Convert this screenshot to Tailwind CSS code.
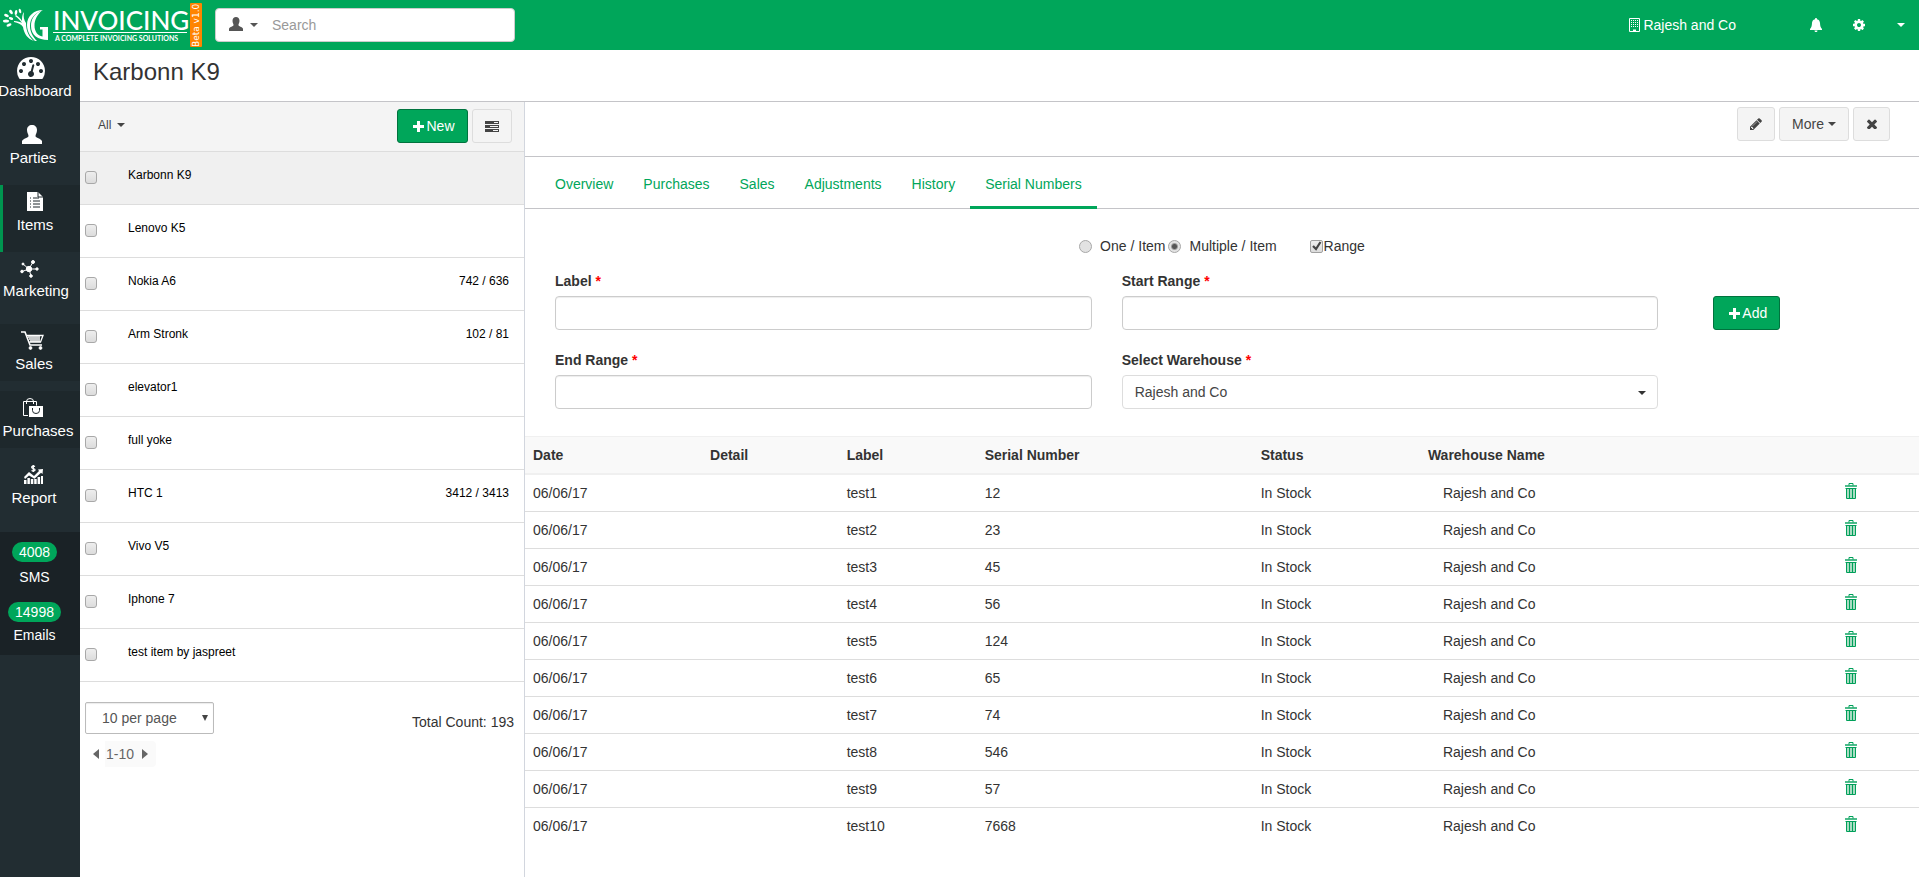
<!DOCTYPE html>
<html lang="en">
<head>
    <meta charset="UTF-8">
    <meta name="viewport" content="width=device-width, initial-scale=1.0">
    <title>Karbonn K9 - G Invoicing</title>
    <script src="https://cdn.jsdelivr.net/npm/@tailwindcss/browser@4"></script>
</head>
<body class="flex min-h-screen flex-col bg-white font-['Liberation_Sans',Arial,sans-serif] text-sm leading-5 text-[#333]">

    <!-- Top bar -->
    <header class="flex h-[50px] items-center bg-[#00a65a] text-white">
        <a href="#" class="flex h-full w-[215px] shrink-0 items-center pl-[3px]" aria-label="G Invoicing">
            <svg class="h-[34px] w-[46px] shrink-0" viewBox="3 9 46 34" fill="#fff">
                <path d="M24 13c-1 5 0 8 2 11 0 8 3 14 8 18-6-2-10-7-11-14-2-3-5-4-9-5v-1c4 0 6 1 8 2-2-3-4-5-7-7l1-1c3 2 5 4 6 6 0-4 0-6 2-9z"/>
                <path d="M43 11c-9 0-16 6-16 15 0 8 5 13 8 16l2 0c-4-4-7-9-7-15 0-8 5-13 13-16z"/>
                <path d="M42 11.500c-8 3-11 9-11 15.500 0 9 7 14 17 14V28h-8v2.500h2.500v7c-5-1-8-5-8-11 0-6 3-11 7.500-15z"/>
                <ellipse cx="6" cy="22" rx="3" ry="1.500"/>
                <ellipse cx="9" cy="26" rx="2.600" ry="1.400" transform="rotate(-20 9 26)"/>
                <ellipse cx="6.500" cy="16.500" rx="2.500" ry="1.500" transform="rotate(25 6.500 16.500)"/>
                <ellipse cx="11" cy="13" rx="2.500" ry="1.500" transform="rotate(55 11 13)"/>
                <ellipse cx="16" cy="13.500" rx="2.500" ry="1.300" transform="rotate(100 16 13.500)"/>
                <ellipse cx="20" cy="12" rx="2.300" ry="1.200" transform="rotate(75 20 12)"/>
                <ellipse cx="11" cy="19.500" rx="2.300" ry="1.200" transform="rotate(20 11 19.500)"/>
            </svg>
            <span class="ml-1 flex w-[134px] flex-col font-[Lato,sans-serif] whitespace-nowrap">
                <span class="border-b border-white text-[26px] leading-6 font-medium">INVOICING</span>
                <span class="pl-0.5 text-[7px] leading-[10px] font-bold">A COMPLETE INVOICING SOLUTIONS</span>
            </span>
            <span class="ml-[3px] flex h-[44px] w-3 rotate-180 items-center justify-center rounded-[1px] bg-[#ff8400] font-['DejaVu_Sans',sans-serif] text-[9px] leading-3 whitespace-nowrap [writing-mode:vertical-rl]">Beta v1.0</span>
        </a>
        <form class="flex h-[34px] w-[300px] items-center rounded border border-[#ccc] bg-white text-[#555]">
            <button type="button" class="flex items-center gap-[7px] pl-[13px]" aria-label="Search in parties">
                <svg class="mb-0.5 h-[14px] w-[14px]" viewBox="0 0 20 19" preserveAspectRatio="none" fill="currentColor"><path d="M10 0c3 0 5 2 5 5 0 3-1.500 4-1.500 6 0 2 5.500 2.500 6.500 5v3H0v-3c1-2.500 6.500-3 6.500-5 0-2-1.500-3-1.500-6 0-3 2-5 5-5z"/></svg>
                <svg class="h-1 w-2" viewBox="0 0 8 4" fill="currentColor"><path d="M0 0h8L4 4z"/></svg>
            </button>
            <input type="text" aria-label="Search" placeholder="Search" class="ml-[14px] w-full bg-transparent outline-none placeholder:text-[#999]">
        </form>
        <nav class="ml-auto flex items-center pr-[14px]">
            <a href="#" class="mr-[74px] flex items-center gap-[3px]">
                <svg class="h-[14px] w-[11px]" viewBox="0 0 11 14" fill="none" stroke="#fff"><path d="M.5.5h10v13H.5z"/><path d="M2.500 2v8M4.500 2v8M6.500 2v8M8.500 2v8" stroke-dasharray="1 1"/><path d="M4 12.500h3" stroke-width="2"/></svg>
                Rajesh and Co
            </a>
            <a href="#" class="mr-[31px]" aria-label="Notifications">
                <svg class="h-[14px] w-3" viewBox="0 0 12 14" fill="#fff"><path d="M6 0c.7 0 1 .5 1 1.200C9 1.600 9.800 3 10 5c.2 3 .5 4 2 6v1H0v-1c1.500-2 1.800-3 2-6 .2-2 1-3.400 3-3.800C5 .5 5.300 0 6 0zM4.500 12.500h3c0 1-.7 1.500-1.500 1.500s-1.500-.5-1.500-1.500z"/></svg>
            </a>
            <a href="#" class="mr-8" aria-label="Settings">
                <svg class="h-3 w-3" viewBox="128 128 1536 1536" fill="#fff"><path d="M1152 896q0-106-75-181t-181-75-181 75-75 181 75 181 181 75 181-75 75-181zm512-109v222q0 12-8 23t-20 13l-185 28q-19 54-39 91 35 50 107 138 10 12 10 25t-9 23q-27 37-99 108t-94 71q-12 0-26-9l-138-108q-44 23-91 38-16 136-29 186-7 28-36 28h-222q-14 0-24.500-8.500t-11.500-21.500l-28-184q-49-16-90-37l-141 107q-10 9-25 9-14 0-25-11-126-114-165-168-7-10-7-23 0-12 8-23 15-21 51-66.500t54-70.500q-27-50-41-99l-183-27q-13-2-21-12.500t-8-23.500v-222q0-12 8-23t19-13l186-28q14-46 39-92-40-57-107-138-10-12-10-24 0-10 9-23 26-36 98.500-107.500t94.500-71.500q13 0 26 10l138 107q44-23 91-38 16-136 29-186 7-28 36-28h222q14 0 24.500 8.500t11.500 21.500l28 184q49 16 90 37l142-107q9-9 24-9 13 0 25 10 129 119 165 170 7 8 7 22 0 12-8 23-15 21-51 66.500t-54 70.500q26 50 41 98l183 28q13 2 21 12.500t8 23.500z"/></svg>
            </a>
            <a href="#" aria-label="Account"><svg class="h-1 w-2" viewBox="0 0 8 4" fill="#fff"><path d="M0 0h8L4 4z"/></svg></a>
        </nav>
    </header>

    <div class="flex grow">
        <!-- Sidebar -->
        <nav class="flex w-20 shrink-0 flex-col bg-[#222d32] text-[15px] text-white">
            <a href="#" class="flex h-[67px] flex-col pt-[7px]">
                <span class="flex w-[70px] flex-col items-center gap-0.5">
                    <svg class="mr-2 h-[22px] w-7" viewBox="0 256 1792 1408" fill="#fff"><path d="M384 1152q0-53-37.500-90.500t-90.500-37.500-90.500 37.500-37.500 90.500 37.500 90.500 90.500 37.500 90.500-37.500 37.500-90.500zm192-448q0-53-37.500-90.500t-90.500-37.500-90.500 37.500-37.500 90.500 37.500 90.500 90.500 37.500 90.500-37.500 37.500-90.500zm428 481l101-382q6-26-7.500-48.500t-38.500-29.500-48 6.500-30 39.500l-101 382q-60 5-107 43.500t-63 98.500q-20 77 20 146t117 89 146-20 89-117q16-60-6-117t-72-91zm660-33q0-53-37.500-90.500t-90.500-37.500-90.500 37.500-37.500 90.500 37.500 90.500 90.500 37.500 90.500-37.500 37.500-90.500zm-640-640q0-53-37.500-90.500t-90.500-37.500-90.500 37.500-37.500 90.500 37.500 90.500 90.500 37.500 90.500-37.500 37.500-90.500zm448 192q0-53-37.500-90.500t-90.500-37.500-90.500 37.500-37.500 90.500 37.500 90.500 90.500 37.500 90.500-37.500 37.500-90.500zm320 448q0 261-141 483-19 29-54 29h-1402q-35 0-54-29-141-221-141-483 0-182 71-348t191-286 286-191 348-71 348 71 286 191 191 286 71 348z"/></svg>
                    Dashboard
                </span>
            </a>
            <a href="#" class="flex h-[68px] flex-col pt-2">
                <span class="flex w-[66px] flex-col items-center gap-1">
                    <svg class="mr-0.5 h-[19px] w-5" viewBox="0 0 20 19" fill="#fff"><path d="M10 0c3 0 5 2 5 5 0 3-1.500 4-1.500 6 0 2 5.500 2.500 6.500 5v3H0v-3c1-2.500 6.500-3 6.500-5 0-2-1.500-3-1.500-6 0-3 2-5 5-5z"/></svg>
                    Parties
                </span>
            </a>
            <a href="#" class="flex h-[67px] flex-col border-l-3 border-[#00954f] bg-[#1e282c] pt-[7px]">
                <span class="flex w-16 flex-col items-center gap-1">
                    <svg class="h-[19px] w-4" viewBox="0 0 16 19"><path d="M0 0h11l5 5v14H0z" fill="#fff"/><path d="M11 0v5h5M3 6h1M6 6h6M3 9h1M6 9h7M3 12h1M6 12h7M3 15h1M6 15h7" stroke="#1e282c" fill="none"/></svg>
                    Items
                </span>
            </a>
            <a href="#" class="flex h-[72px] flex-col pt-2">
                <span class="flex w-[72px] flex-col items-center gap-[3px]">
                    <svg class="mr-[14px] h-[18px] w-[19px]" viewBox="0 0 19 18" fill="#fff" stroke="#fff"><circle cx="9" cy="9" r="2.700"/><circle cx="2" cy="11.500" r="1.300"/><circle cx="3" cy="4" r="1"/><circle cx="13" cy="2" r="1.500"/><circle cx="17" cy="9" r="1.200"/><circle cx="11" cy="16" r="1.300"/><path d="M9 9L2 11.500M9 9L3 4M9 9l4-7M9 9h8M9 9l2 7"/></svg>
                    Marketing
                </span>
            </a>
            <a href="#" class="mb-[10px] flex h-[57px] flex-col bg-[#1e282c] pt-[7px]">
                <span class="flex w-[68px] flex-col items-center gap-1">
                    <svg class="mr-1 h-[19px] w-[23px]" viewBox="0 0 23 19" fill="none" stroke="#fff"><path d="M0 1h4l5 13h12" stroke-width="1.600"/><path d="M6 4.500h16l-2.500 6.500H8.500" stroke-width="1.300"/><path d="M7 6h12M8 8h11M9 10h10" stroke-width="1.300"/><circle cx="9.500" cy="17" r="1.400" fill="#fff"/><circle cx="19.500" cy="17" r="1.400" fill="#fff"/></svg>
                    Sales
                </span>
            </a>
            <a href="#" class="flex h-[57px] flex-col bg-[#1e282c] pt-[7px]">
                <span class="flex w-[76px] flex-col items-center gap-1">
                    <svg class="mr-[10px] h-[19px] w-5" viewBox="0 0 20 19" fill="none" stroke="#fff"><path d="M5 17.500H.5v-14h13v4"/><path d="M3.500 6V3.500a3.500 3 0 0 1 7 0V6"/><path d="M6 8h14v11H6z" fill="#fff" stroke="none"/><path d="M9.500 10v2.500a3.500 3 0 0 0 7 0V10" stroke="#1e282c"/></svg>
                    Purchases
                </span>
            </a>
            <a href="#" class="flex h-[84px] flex-col pt-[17px]">
                <span class="flex w-[68px] flex-col items-center gap-1">
                    <svg class="mr-0.5 h-[19px] w-[19px]" viewBox="0 0 19 19" fill="#fff"><path d="M0 15h2.500v4H0zM3.400 13h2.500v6h-2.500zM6.800 14h2.500v5h-2.500zM10.200 14h2.500v5h-2.500zM13.600 12h2.500v7h-2.500zM17 11h2v8h-2z"/><path d="M0 12l5-5 5 4 5-5-1-1.500 5-.5-.5 5-1.500-1.200-6.500 6L5 10.500 1 14z"/><path d="M11 1.500C9 .5 7.500 1 7.700 2.300c.2 1.500 3.200 1 3.300 2.500.1 1.200-1.800 1.500-3.500.7M9.300 0v7" fill="none" stroke="#fff" stroke-width="1.300"/></svg>
                    Report
                </span>
            </a>
            <div class="flex h-[123px] flex-col bg-[#1a2226] pt-[10px] text-sm">
                <a href="#" class="flex h-[60px] w-[69px] flex-col items-center gap-[5px]"><span class="rounded-full bg-[#00a65a] px-[7px]">4008</span>SMS</a>
                <a href="#" class="flex w-[69px] flex-col items-center gap-[3px]"><span class="rounded-full bg-[#00a65a] px-[7px]">14998</span>Emails</a>
            </div>
        </nav>

        <main class="flex min-w-0 grow flex-col">
            <div class="h-[52px] border-b border-[#c4c4c8] px-[13px] pt-2">
                <h1 class="text-2xl leading-7">Karbonn K9</h1>
            </div>

            <div class="flex grow">
                <!-- Item list -->
                <section class="w-[445px] shrink-0 border-r border-[#d2d6de]">
                    <div class="flex h-[50px] justify-end gap-1 border-b border-[#ddd] bg-[#f4f4f4] pt-[7px] pr-3">
                        <button type="button" class="mr-auto ml-[18px] flex h-8 items-center gap-1.5 text-xs text-[#444]">All
                            <svg class="h-1 w-2" viewBox="0 0 8 4" fill="currentColor"><path d="M0 0h8L4 4z"/></svg>
                        </button>
                        <button type="button" class="flex h-[34px] w-[71px] items-center justify-center gap-0.5 rounded-[3px] border border-[#00733e] bg-[#00a65a] pl-[3px] text-white">
                            <svg class="h-[11px] w-[11px]" viewBox="0 0 11 11" fill="currentColor"><path d="M4 0h3v4h4v3H7v4H4V7H0V4h4z"/></svg>New
                        </button>
                        <button type="button" class="flex h-[34px] w-10 items-center justify-center rounded-[3px] border border-[#ddd] bg-[#f4f4f4] text-[#444]" aria-label="Filter">
                            <svg class="h-[11px] w-[14px]" viewBox="0 0 14 11"><path d="M0 0h14v3H0zM0 4h14v3H0zM0 8h14v3H0z" fill="currentColor"/><path d="M9 1.500h4M5 5.500h8M8 9.500h5" stroke="#f4f4f4"/></svg>
                        </button>
                    </div>
                    <ul id="itemList"></ul>
                    <div class="flex justify-between pt-5 pr-[10px] pl-[5px]">
                        <div>
                            <div class="relative h-8 w-[129px]">
                                <select aria-label="Items per page" class="h-full w-full appearance-none rounded-[2px] border border-[#bbb] bg-white pl-4 text-[#555] shadow-[inset_0_1px_1px_rgba(0,0,0,0.08)]"><option>10 per page</option></select>
                                <svg class="pointer-events-none absolute top-[13px] right-[6px] h-[6px] w-[6px]" viewBox="0 0 6 6" fill="#444"><path d="M0 0h6L3 6z"/></svg>
                            </div>
                            <div class="mt-[7px] flex h-[26px] items-center text-[#666]">
                                <button type="button" class="w-5 pl-2" aria-label="Previous"><svg class="h-[10px] w-[6px]" viewBox="0 0 6 10" fill="#666"><path d="M6 0v10L0 5z"/></svg></button>
                                <span class="flex h-full items-center gap-2 rounded-r bg-[#fafafa] pr-2 pl-px">1-10
                                    <button type="button" aria-label="Next"><svg class="h-[10px] w-[6px]" viewBox="0 0 6 10" fill="#666"><path d="M0 0v10l6-5z"/></svg></button>
                                </span>
                            </div>
                        </div>
                        <p class="pt-[10px]">Total Count: 193</p>
                    </div>
                </section>

                <!-- Item detail -->
                <section class="min-w-0 grow">
                    <div class="flex h-[55px] justify-end gap-1 border-b border-[#c4c4c8] pt-[5px] pr-[29px] text-[#444]">
                        <button type="button" class="flex h-[34px] w-[38px] items-center justify-center rounded-[3px] border border-[#ddd] bg-[#f4f4f4]" aria-label="Edit">
                            <svg class="h-3 w-3" viewBox="128 128 1536 1536" fill="currentColor"><path d="M491 1536l91-91-235-235-91 91v107h128v128h107zm523-928q0-22-22-22-10 0-17 7l-542 542q-7 7-7 17 0 22 22 22 10 0 17-7l542-542q7-7 7-17zm-54-192l416 416-832 832h-416v-416zm683 96q0 53-37 90l-166 166-416-416 166-165q36-38 90-38 53 0 91 38l235 234q37 39 37 91z"/></svg>
                        </button>
                        <button type="button" class="flex h-[34px] w-[70px] items-center justify-center gap-1 rounded-[3px] border border-[#ddd] bg-[#f4f4f4]">More
                            <svg class="h-1 w-2" viewBox="0 0 8 4" fill="currentColor"><path d="M0 0h8L4 4z"/></svg>
                        </button>
                        <button type="button" class="flex h-[34px] w-[37px] items-center justify-center rounded-[3px] border border-[#ddd] bg-[#f4f4f4]" aria-label="Close">
                            <svg class="h-[10px] w-[10px]" viewBox="302 302 1188 1188" fill="currentColor"><path d="M1490 1322q0 40-28 68l-136 136q-28 28-68 28t-68-28l-294-294-294 294q-28 28-68 28t-68-28l-136-136q-28-28-28-68t28-68l294-294-294-294q-28-28-28-68t28-68l136-136q28-28 68-28t68 28l294 294 294-294q28-28 68-28t68 28l136 136q28 28 28 68t-28 68l-294 294 294 294q28 28 28 68z"/></svg>
                        </button>
                    </div>

                    <nav class="flex h-[52px] border-b border-[#c4c4c8] px-[15px] text-[#00a65a]">
                        <a href="#" class="px-[15px] pt-[17px]">Overview</a>
                        <a href="#" class="px-[15px] pt-[17px]">Purchases</a>
                        <a href="#" class="px-[15px] pt-[17px]">Sales</a>
                        <a href="#" class="px-[15px] pt-[17px]">Adjustments</a>
                        <a href="#" class="px-[15px] pt-[17px]">History</a>
                        <a href="#" class="-mb-px border-b-3 border-[#00a65a] px-[15px] pt-[17px]">Serial Numbers</a>
                    </nav>

                    <form class="pt-[27px] pr-[19px] pl-[15px]">
                        <div class="flex justify-center pl-1">
                            <label class="flex items-center"><input type="radio" name="mode" class="mr-2 h-[13px] w-[13px] appearance-none rounded-full border border-[#a8a8a8] bg-[#e2e2e2]">One / Item</label>
                            <label class="ml-[3px] flex items-center"><input type="radio" name="mode" checked class="mr-2 h-[13px] w-[13px] appearance-none rounded-full border border-[#a8a8a8] bg-[#e2e2e2] checked:bg-[radial-gradient(#555_0_2px,#e2e2e2_4px)]">Multiple / Item</label>
                            <label class="relative ml-[33px] flex items-center"><input type="checkbox" checked class="mr-px h-[13px] w-[13px] appearance-none rounded-[2px] border border-[#a0a0a0] bg-linear-to-b from-[#eee] to-[#dcdcdc]">Range
                                <svg class="pointer-events-none absolute left-[2px] h-[10px] w-[10px]" viewBox="0 0 10 10" fill="none" stroke="#444" stroke-width="2.200"><path d="M1 5l3 3 4.500-7"/></svg>
                            </label>
                        </div>
                        <div class="flex pt-[15px]">
                            <div class="grid w-10/12 grid-cols-2 gap-y-[15px]">
                                <div class="px-[15px]">
                                    <label for="label" class="block font-bold">Label <span class="text-[#f00]">*</span></label>
                                    <input id="label" type="text" class="mt-[5px] block h-[34px] w-full rounded border border-[#ccc] px-3 shadow-[inset_0_1px_1px_rgba(0,0,0,0.075)]">
                                </div>
                                <div class="px-[15px]">
                                    <label for="start" class="block font-bold">Start Range <span class="text-[#f00]">*</span></label>
                                    <input id="start" type="text" class="mt-[5px] block h-[34px] w-full rounded border border-[#ccc] px-3 shadow-[inset_0_1px_1px_rgba(0,0,0,0.075)]">
                                </div>
                                <div class="px-[15px] pt-[5px]">
                                    <label for="end" class="block font-bold">End Range <span class="text-[#f00]">*</span></label>
                                    <input id="end" type="text" class="mt-[5px] block h-[34px] w-full rounded border border-[#ccc] px-3 shadow-[inset_0_1px_1px_rgba(0,0,0,0.075)]">
                                </div>
                                <div class="px-[15px] pt-[5px]">
                                    <label for="warehouse" class="block font-bold">Select Warehouse <span class="text-[#f00]">*</span></label>
                                    <div class="relative mt-[5px]">
                                        <select id="warehouse" class="block h-[34px] w-full appearance-none rounded border border-[#ddd] px-3 text-[#444]"><option>Rajesh and Co</option></select>
                                        <svg class="pointer-events-none absolute top-4 right-3 h-1 w-2" viewBox="0 0 8 4" fill="#333"><path d="M0 0h8L4 4z"/></svg>
                                    </div>
                                </div>
                            </div>
                            <div class="pt-[25px] pl-10">
                                <button type="button" class="flex h-[34px] w-[67px] items-center justify-center gap-0.5 rounded-[3px] border border-[#00733e] bg-[#00a65a] pl-[3px] text-white">
                                    <svg class="h-[11px] w-[11px]" viewBox="0 0 11 11" fill="currentColor"><path d="M4 0h3v4h4v3H7v4H4V7H0V4h4z"/></svg>Add
                                </button>
                            </div>
                        </div>
                    </form>

                    <table class="mt-[27px] w-full table-fixed text-left">
                        <thead>
                            <tr class="border-t border-b-2 border-[#f0f0f0] bg-[#f9f9f9]">
                                <th class="w-[12.7%] p-2">Date</th>
                                <th class="w-[9.8%] p-2">Detail</th>
                                <th class="w-[9.9%] p-2">Label</th>
                                <th class="w-[19.8%] p-2">Serial Number</th>
                                <th class="w-[12%] p-2">Status</th>
                                <th class="p-2">Warehouse Name</th>
                                <th class="w-[82px] p-2"></th>
                            </tr>
                        </thead>
                        <tbody id="serialRows"></tbody>
                    </table>
                </section>
            </div>
        </main>
    </div>

    <script>
        const items = [
            ['Karbonn K9', ''],
            ['Lenovo K5', ''],
            ['Nokia A6', '742 / 636'],
            ['Arm Stronk', '102 / 81'],
            ['elevator1', ''],
            ['full yoke', ''],
            ['HTC 1', '3412 / 3413'],
            ['Vivo V5', ''],
            ['Iphone 7', ''],
            ['test item by jaspreet', '']
        ];
        const serials = [12, 23, 45, 56, 124, 65, 74, 546, 57, 7668];

        document.getElementById('itemList').innerHTML = items.map(([name, stock], i) => `
            <li class="flex h-[53px] border-b border-[#ddd] pr-[15px] pl-[5px] text-xs text-black ${i === 0 ? 'bg-[#f0f0f0]' : ''}">
                <input type="checkbox" id="item${i}" class="mt-[19px] h-[13px] w-3 shrink-0 appearance-none rounded-[3px] border border-[#a8a8a8] bg-linear-to-b from-[#eee] to-[#dcdcdc]">
                <label for="item${i}" class="ml-[31px] pt-[15px] leading-4">${name}</label>
                <span class="ml-auto pt-[15px] leading-4">${stock}</span>
            </li>`).join('');

        document.getElementById('serialRows').innerHTML = serials.map((serial, i) => `
            <tr class="border-b border-[#ddd] last:border-0">
                <td class="p-2">06/06/17</td>
                <td class="p-2"></td>
                <td class="p-2">test${i + 1}</td>
                <td class="p-2">${serial}</td>
                <td class="p-2">In Stock</td>
                <td class="p-2 pl-[23px]">Rajesh and Co</td>
                <td class="p-2 align-top">
                    <button type="button" class="block" aria-label="Delete test${i + 1}">
                        <svg class="h-4 w-3" viewBox="0 0 12 16" fill="none" stroke="#00a05a"><path d="M1 5h10v10H1z" fill="#a8dcc2" stroke="none"/><path d="M0 3h12" stroke-width="1.400"/><path d="M4 2.500v-2h4v2M.5 5.500h11M1.500 5v10.500h9V5M4.500 6v9M7.500 6v9"/></svg>
                    </button>
                </td>
            </tr>`).join('');
    </script>
</body>
</html>
